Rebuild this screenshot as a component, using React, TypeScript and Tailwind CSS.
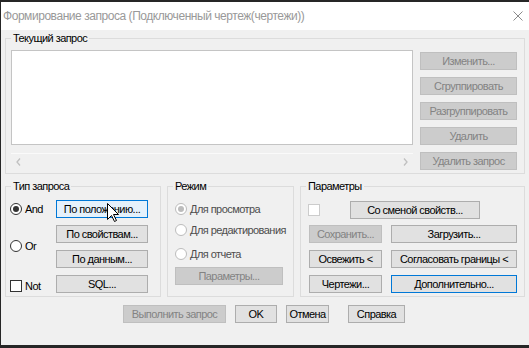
import React from "react";

const base =
  "flex items-center justify-center border text-[11px] leading-none whitespace-nowrap";

function Btn({
  children,
  cls,
}: {
  children: React.ReactNode;
  cls: string;
}) {
  return <div className={base + " " + cls}>{children}</div>;
}

const N = "bg-[#e1e1e1] border-[#adadad] text-black";
const D = "bg-[#cccccc] border-[#bfbfbf] text-[#838383]";

function Radio({
  checked,
  disabled,
}: {
  checked?: boolean;
  disabled?: boolean;
}) {
  return (
    <div
      className={
        disabled
          ? "shrink-0 w-[12px] h-[12px] rounded-full border border-[#bcbcbc] bg-[#ffffff] flex items-center justify-center"
          : "shrink-0 w-[12px] h-[12px] rounded-full border border-[#333333] bg-white flex items-center justify-center"
      }
    >
      {checked ? (
        <div
          className={
            disabled
              ? "w-[6px] h-[6px] rounded-full bg-[#bcbcbc]"
              : "w-[6px] h-[6px] rounded-full bg-[#333333]"
          }
        />
      ) : null}
    </div>
  );
}

function Group({
  label,
  cls,
  children,
}: {
  label: string;
  cls: string;
  children: React.ReactNode;
}) {
  return (
    <div className={"relative border border-[#dcdcdc] " + cls}>
      <span className="absolute -top-[8px] left-[5px] bg-[#f0f0f0] px-[2px] text-[11px] leading-[14px] text-black whitespace-nowrap">
        {label}
      </span>
      {children}
    </div>
  );
}

export default function App() {
  return (
    <div
      className="w-[529px] h-[348px] bg-[#262626] overflow-hidden pt-[2px] pl-[1px]"
      style={{ fontFamily: '"Liberation Sans", Arial, sans-serif' }}
    >
      <div className="relative w-[528px] h-[343px] bg-[#f0f0f0] flex flex-col">
        {/* title bar */}
        <div className="h-[28px] bg-white flex items-center justify-between pl-[2px] pr-[6px]">
          <span className="text-[12px] tracking-[-0.45px] text-[#999999] whitespace-nowrap">
            Формирование запроса (Подключенный чертеж(чертежи))
          </span>
          <svg width="10" height="10" viewBox="0 0 10 10">
            <path d="M0.5 0.5 L9.5 9.5 M9.5 0.5 L0.5 9.5" stroke="#8a8a8a" strokeWidth="1" />
          </svg>
        </div>

        {/* body */}
        <div className="pl-[4px] flex flex-col tracking-[-0.55px]">
          <Group label="Текущий запрос" cls="mt-[8px] w-[520px] h-[136px] flex pl-[5px] pt-[11px] pr-[7px]">
            <div className="flex flex-col w-[402px]">
              <div className="h-[95px] bg-white border border-[#c4c4c4]" />
              <div className="mt-[8px] h-[17px] border-t border-[#fafafa] flex items-center justify-between px-[5px]">
                <svg width="5" height="8" viewBox="0 0 5 8">
                  <path d="M4 0.5 L1 4 L4 7.5" stroke="#c0c0c0" strokeWidth="1.3" fill="none" />
                </svg>
                <svg width="5" height="8" viewBox="0 0 5 8">
                  <path d="M1 0.5 L4 4 L1 7.5" stroke="#c0c0c0" strokeWidth="1.3" fill="none" />
                </svg>
              </div>
            </div>
            <div className="ml-[7px] mt-[2px] flex flex-col gap-[7px] w-[97px]">
              <Btn cls={D + " h-[18px]"}>Изменить...</Btn>
              <Btn cls={D + " h-[18px]"}>Сгруппировать</Btn>
              <Btn cls={D + " h-[18px]"}>Разгруппировать</Btn>
              <Btn cls={D + " h-[18px]"}>Удалить</Btn>
              <Btn cls={D + " h-[18px]"}>Удалить запрос</Btn>
            </div>
          </Group>

          <div className="mt-[12px] flex gap-[6px]">
            <Group label="Тип запроса" cls="w-[156px] h-[111px] flex pt-[13px] pl-[4px]">
              <div className="w-[46px] flex flex-col text-[11px]">
                <div className="h-[18px] flex items-center gap-[3px]">
                  <Radio checked />
                  <span>And</span>
                </div>
                <div className="mt-[19px] h-[18px] flex items-center gap-[3px]">
                  <Radio />
                  <span>Or</span>
                </div>
                <div className="mt-[22px] h-[18px] flex items-center gap-[3px]">
                  <div className="w-[12px] h-[12px] border border-[#333333] bg-white" />
                  <span>Not</span>
                </div>
              </div>
              <div className="w-[92px] flex flex-col gap-[7px]">
                <Btn cls="bg-[#e5f1fb] border-[#0078d7] text-black h-[18px]">По положению...</Btn>
                <Btn cls={N + " h-[18px]"}>По свойствам...</Btn>
                <Btn cls={N + " h-[18px]"}>По данным...</Btn>
                <Btn cls={N + " h-[18px]"}>SQL...</Btn>
              </div>
            </Group>

            <Group label="Режим" cls="w-[127px] h-[111px] flex flex-col pt-[13px] pl-[7px] text-[11px] text-[#4d4d4d]">
              <div className="h-[18px] flex items-center gap-[3px] whitespace-nowrap">
                <Radio checked disabled />
                <span>Для просмотра</span>
              </div>
              <div className="mt-[3px] h-[18px] flex items-center gap-[3px] whitespace-nowrap">
                <Radio disabled />
                <span>Для редактирования</span>
              </div>
              <div className="mt-[6px] h-[18px] flex items-center gap-[3px] whitespace-nowrap">
                <Radio disabled />
                <span>Для отчета</span>
              </div>
              <Btn cls={D + " mt-[4px] w-[108px] h-[18px]"}>Параметры...</Btn>
            </Group>

            <Group label="Параметры" cls="w-[225px] h-[111px] flex flex-col pt-[14px] pl-[7px]">
              <div className="h-[18px] flex items-center">
                <div className="w-[12px] h-[12px] border border-[#cccccc] bg-white" />
                <Btn cls={N + " ml-[30px] w-[130px] h-[18px]"}>Со сменой свойств...</Btn>
              </div>
              <div className="mt-[6px] grid grid-cols-[73px_126px] gap-x-[9px] gap-y-[7px] pl-[1px]">
                <Btn cls={D + " h-[18px]"}>Сохранить...</Btn>
                <Btn cls={N + " h-[18px]"}>Загрузить...</Btn>
                <Btn cls={N + " h-[18px]"}>Освежить &lt;</Btn>
                <Btn cls={N + " h-[18px]"}>Согласовать границы &lt;</Btn>
                <Btn cls={N + " h-[18px]"}>Чертежи...</Btn>
                <Btn cls="bg-[#e1e1e1] border-[#0078d7] text-black h-[18px]">Дополнительно...</Btn>
              </div>
            </Group>
          </div>

          <div className="mt-[8px] flex pl-[118px]">
            <Btn cls={D + " w-[103px] h-[18px]"}>Выполнить запрос</Btn>
            <Btn cls={N + " ml-[9px] w-[42px] h-[18px]"}>OK</Btn>
            <Btn cls={N + " ml-[9px] w-[43px] h-[18px]"}>Отмена</Btn>
            <Btn cls={N + " ml-[19px] w-[57px] h-[18px]"}>Справка</Btn>
          </div>
        </div>

        {/* mouse cursor */}
        <svg
          className="absolute left-[106px] top-[201px]"
          width="13"
          height="20"
          viewBox="0 0 13 20"
        >
          <path
            d="M0.5 0.5 L0.5 16.5 L4.5 12.5 L7.5 18.5 L9.5 17.5 L6.5 11.5 L11.5 11.5 Z"
            fill="white"
            stroke="black"
            strokeWidth="1"
            strokeLinejoin="miter"
          />
        </svg>
      </div>
    </div>
  );
}
